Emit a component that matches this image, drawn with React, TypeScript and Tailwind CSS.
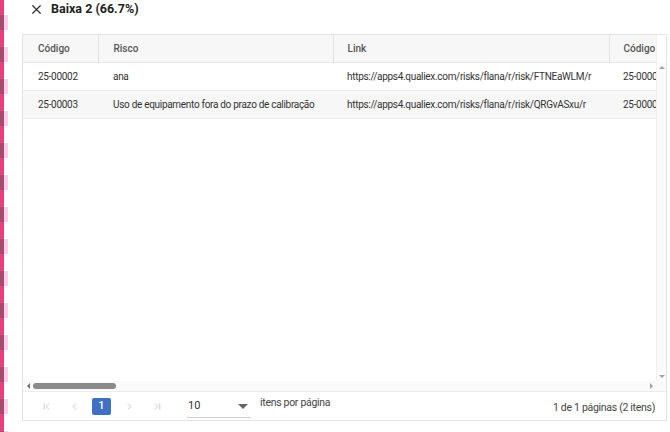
import React from 'react';
import { X, ChevronFirst, ChevronLeft, ChevronRight, ChevronLast } from 'lucide-react';

const ROWS = [
  {
    codigo: '25-00002',
    risco: 'ana',
    link: 'https://apps4.qualiex.com/risks/flana/r/risk/FTNEaWLM/r',
    codigo2: '25-00002',
  },
  {
    codigo: '25-00003',
    risco: 'Uso de equipamento fora do prazo de calibração',
    link: 'https://apps4.qualiex.com/risks/flana/r/risk/QRGvASxu/r',
    codigo2: '25-00003',
  },
];

function Stripe() {
  const segs = Array.from({ length: 14 });
  return (
    <div className="w-[8px] h-[432px] flex flex-col shrink-0 pt-[15px] overflow-hidden">
      {segs.map((_, i) => (
        <div key={i} className="flex flex-col shrink-0">
          <div className="flex h-[15px]">
            <div className="w-[4px] bg-[#a9496d]" />
            <div className="w-[4px] bg-[#fbd0ec]" />
          </div>
          <div className="flex h-[17px]">
            <div className="w-[4px] bg-[#ea3f7b]" />
            <div className="w-[4px] bg-white" />
          </div>
        </div>
      ))}
    </div>
  );
}

function PagerBtn({ children }: { children: React.ReactNode }) {
  return (
    <button className="w-[20px] h-[20px] flex items-center justify-center text-[#c4c4c4]">
      {children}
    </button>
  );
}

export default function App() {
  return (
    <div
      className="w-[670px] h-[432px] flex bg-white overflow-hidden text-[#333]"
      style={{ fontFamily: 'Roboto, "Liberation Sans", sans-serif' }}
    >
      <div className="h-[432px] relative shrink-0 bg-[linear-gradient(to_right,#ea3f7b_4px,white_4px)]">
        <Stripe />
      </div>

      <div className="flex-1 min-w-0 flex flex-col pl-[14px] pr-[3px]">
        {/* title */}
        <div className="h-[20px] flex items-center gap-[7px] pl-[7px] mt-[-1px]">
          <X size={15} strokeWidth={2} className="text-[#333]" />
          <span className="text-[12.5px] font-bold text-[#222]">Baixa 2 (66.7%)</span>
        </div>

        {/* table box */}
        <div className="mt-[15px] h-[387px] border border-[#e3e3e3] flex flex-col min-w-0">
          <div className="flex-1 flex flex-col min-h-0">
            <div className="flex-1 flex min-h-0">
              <div className="flex-1 min-w-0 overflow-hidden">
                <table className="table-fixed border-collapse text-[10px] w-[700px]">
                  <colgroup>
                    <col className="w-[75px]" />
                    <col className="w-[235px]" />
                    <col className="w-[276px]" />
                    <col className="w-[114px]" />
                  </colgroup>
                  <thead>
                    <tr className="h-[27px] bg-[#f7f7f7] text-[#555] border-b border-[#e6e6e6]">
                      <th className="text-left font-medium pl-[15px] border-r border-[#e3e3e3]">Código</th>
                      <th className="text-left font-medium pl-[15px] border-r border-[#e3e3e3]">Risco</th>
                      <th className="text-left font-medium pl-[14px] border-r border-[#e3e3e3]">Link</th>
                      <th className="text-left font-medium pl-[14px]">Código</th>
                    </tr>
                  </thead>
                  <tbody className="tracking-[-0.3px]">
                    {ROWS.map((r, i) => (
                      <tr
                        key={r.codigo}
                        className={`h-[28px] border-b border-[#ececec] ${i % 2 === 1 ? 'bg-[#f7f7f7]' : 'bg-white'}`}
                      >
                        <td className="pl-[15px] whitespace-nowrap text-[#333]">{r.codigo}</td>
                        <td className="pl-[15px] whitespace-nowrap text-[#333] overflow-hidden">{r.risco}</td>
                        <td className="pl-[14px] whitespace-nowrap text-[#333] overflow-hidden">{r.link}</td>
                        <td className="pl-[14px] whitespace-nowrap text-[#333]">{r.codigo2}</td>
                      </tr>
                    ))}
                  </tbody>
                </table>
              </div>
              {/* vertical scrollbar */}
              <div className="w-[10px] shrink-0 flex flex-col bg-[#fafafa] border-l border-[#f0f0f0]">
                <div className="h-[27px] bg-white" />
                <div className="h-[10px] flex items-center justify-center">
                  <div className="w-0 h-0 border-l-[3px] border-r-[3px] border-b-[3px] border-l-transparent border-r-transparent border-b-[#a0a0a0]" />
                </div>
                <div className="flex-1" />
                <div className="h-[10px] flex items-center justify-center">
                  <div className="w-0 h-0 border-l-[3px] border-r-[3px] border-t-[3px] border-l-transparent border-r-transparent border-t-[#a0a0a0]" />
                </div>
              </div>
            </div>
            {/* horizontal scrollbar */}
            <div className="h-[11px] flex items-center bg-[#fafafa] border-b border-[#ebebeb] pr-[10px]">
              <div className="w-[10px] flex items-center justify-center">
                <div className="w-0 h-0 border-t-[3px] border-b-[3px] border-r-[3px] border-t-transparent border-b-transparent border-r-[#707070]" />
              </div>
              <div className="w-[83px] h-[6px] rounded-full bg-[#8a8a8a]" />
              <div className="flex-1" />
              <div className="w-[10px] flex items-center justify-center">
                <div className="w-0 h-0 border-t-[3px] border-b-[3px] border-l-[3px] border-t-transparent border-b-transparent border-l-[#a0a0a0]" />
              </div>
            </div>
          </div>

          {/* pager */}
          <div className="h-[28px] flex items-center pl-[13px] pr-[11px] text-[11px]">
            <div className="flex items-center gap-[8px]">
              <PagerBtn><ChevronFirst size={11} /></PagerBtn>
              <PagerBtn><ChevronLeft size={11} /></PagerBtn>
              <div className="w-[19px] h-[17px] bg-[#3f70c4] text-white rounded-[2px] flex items-center justify-center font-medium text-[11px]">1</div>
              <PagerBtn><ChevronRight size={11} /></PagerBtn>
              <PagerBtn><ChevronLast size={11} /></PagerBtn>
            </div>
            <div className="ml-[20px] w-[64px] h-[22px] border-b border-[#cfcfcf] flex items-center justify-between pl-[1px] pr-[3px] mt-[2px]">
              <span className="text-[#333] text-[11px]">10</span>
              <div className="w-0 h-0 border-l-[5px] border-r-[5px] border-t-[5px] border-l-transparent border-r-transparent border-t-[#666]" />
            </div>
            <span className="ml-[9px] text-[#444] text-[10.5px] tracking-[-0.3px] mt-[-7px]">itens por página</span>
            <div className="flex-1" />
            <span className="text-[#444] text-[10.5px] tracking-[-0.3px] mt-[3px]">1 de 1 páginas (2 itens)</span>
          </div>
        </div>
      </div>
    </div>
  );
}
